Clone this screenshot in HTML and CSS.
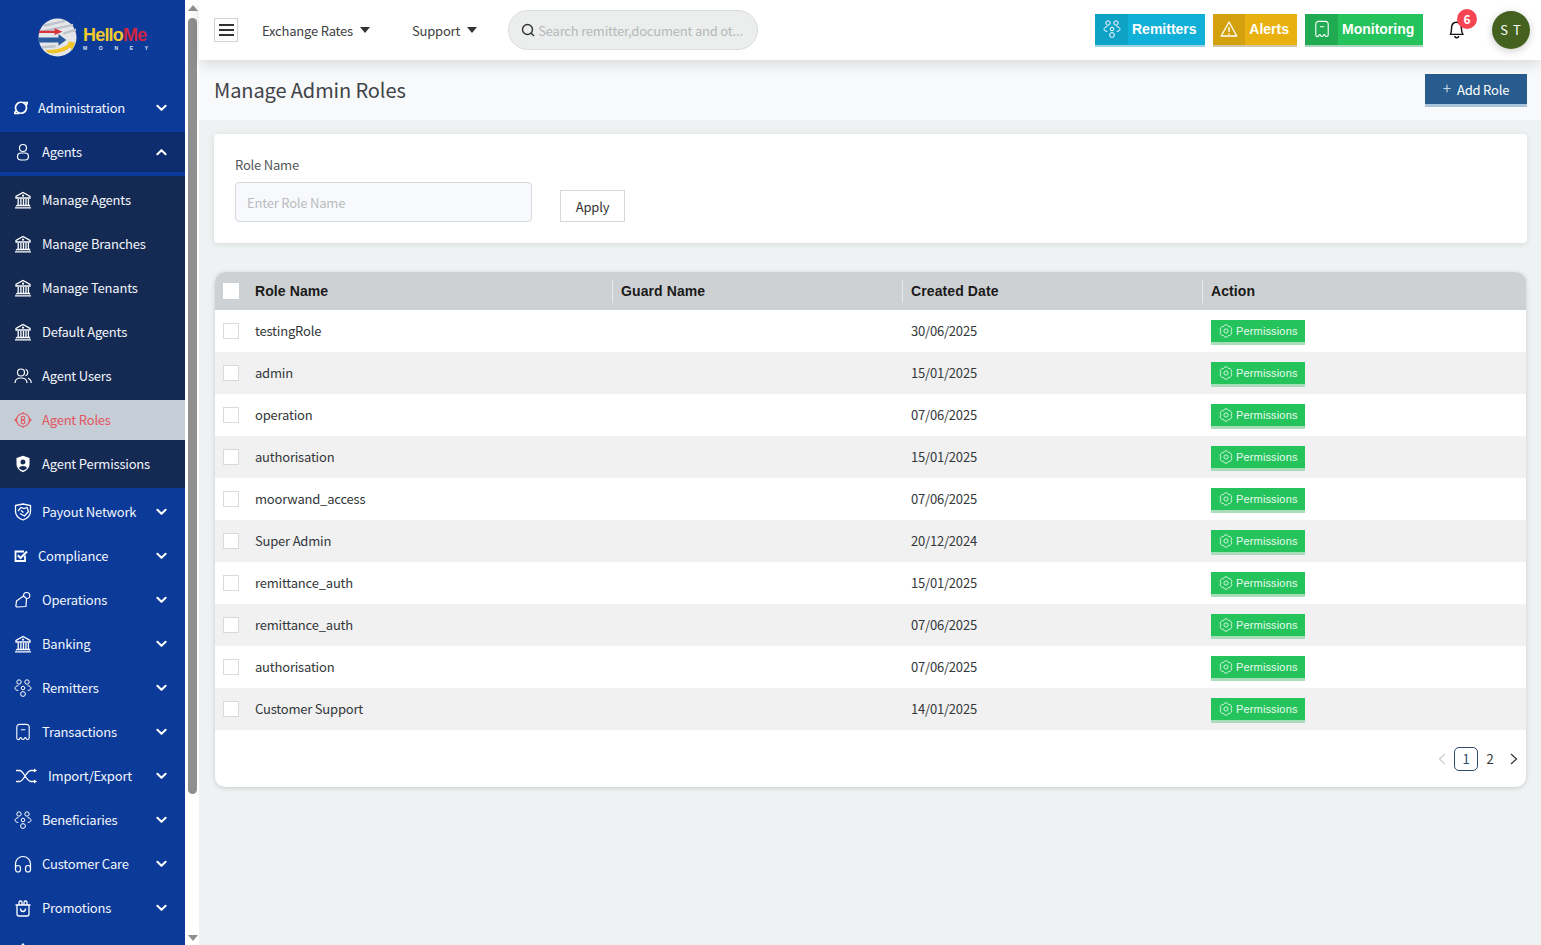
FILE: index.html
```html
<!DOCTYPE html>
<html lang="en">
<head>
<meta charset="utf-8">
<title>Manage Admin Roles</title>
<link rel="stylesheet" href="styles.css">
</head>
<body>
<svg class="defs" width="0" height="0" aria-hidden="true">
  <defs>
    <symbol id="i-bank" viewBox="0 0 18 18"><path d="M2 7V5.500L9 1.500l7 4V7zM1 16.800h16M2.500 14.500h13V15.500M2.500 14.500v1M4.200 8v6M6.900 8v6M9.500 8v6M12 8v6M14.400 8v6" fill="none" stroke="currentColor" stroke-width="1.300"/><circle cx="9" cy="4.700" r="1.100" fill="currentColor"/></symbol>
    <symbol id="i-group" viewBox="0 0 18 18"><g fill="none" stroke="currentColor" stroke-width="1"><circle cx="5" cy="3" r="2.200"/><circle cx="13" cy="3" r="2.200"/><circle cx="9" cy="15" r="2.400"/><circle cx="9" cy="9" r="1.800"/><path d="M4.500 6.700C2.500 6.700 1 7.800 1 9.200s1.500 2.200 3.300 2.200M13.500 6.700c2 0 3.500 1.100 3.500 2.500s-1.500 2.200-3.300 2.200"/></g></symbol>
    <symbol id="i-receipt" viewBox="0 0 18 18"><path d="M2.800 15.200V4A2.600 2.600 0 0 1 5.400 1.400h7.200A2.600 2.600 0 0 1 15.200 4v11.200c-.6 1.800-2.200 1.800-3 .2-.6-1-1.200-1-1.800 0-.7 1.500-2.100 1.500-2.800 0-.6-1-1.200-1-1.800 0-.8 1.600-2.400 1.600-3 0zM6.800 6.800h4.400" fill="none" stroke="currentColor" stroke-width="1.100"/></symbol>
    <symbol id="i-gear" viewBox="0 0 18 18"><g fill="none" stroke="currentColor" stroke-width="1.100"><path d="M15.500 9A3.400 3.400 0 0 1 12.250 14.630 3.400 3.400 0 0 1 5.750 14.630 3.400 3.400 0 0 1 2.500 9 3.400 3.400 0 0 1 5.750 3.370 3.400 3.400 0 0 1 12.250 3.370 3.400 3.400 0 0 1 15.500 9z"/><circle cx="9" cy="9" r="2.700"/></g></symbol>
    <symbol id="i-chev" viewBox="0 0 12 8"><path d="M1.500 1.500 6 6l4.500-4.500" fill="none" stroke="currentColor" stroke-width="2.200" stroke-linecap="round" stroke-linejoin="round"/></symbol>
  </defs>
</svg>

<div class="app">
  <aside class="sidebar">
    <div class="logo">
      <svg class="logo-mark" viewBox="0 0 40 40" aria-hidden="true">
        <circle cx="20" cy="20" r="19.500" fill="#e4e6ea"/>
        <path d="M6 8 28 3M3 14 36 7M26 16l13-4M4 30l14-1" stroke="#bfc3cc" stroke-width="2.500" fill="none"/>
        <path d="M1 13h16V10.500l8 3.500-8 3.500V15.500H1z" fill="#d8323a"/>
        <path d="M0 20h21v-3.500l8 6-8 6V25H1z" fill="#285a9c"/>
        <path d="M7 33 C18 33 26 31 31 27v-3l7 1-3 8-2-3C27 35 18 37 11 36z" fill="#f2c526"/>
      </svg>
      <div class="logo-text">
        <div class="logo-name">Hello<span class="logo-me">Me</span></div>
        <div class="logo-sub">MONEY</div>
      </div>
    </div>

    <nav class="nav">
      <a class="nav-item narrow">
        <svg class="ico" viewBox="0 0 14 16"><path d="M3.500 3.500A5 5 0 1 0 10.500 12 5 5 0 1 0 3.500 3.500zM9 2.500h4.500L12.500 5M5 13.500H.5L1.500 11" fill="none" stroke="currentColor" stroke-width="1.700"/></svg>
        <span class="lbl">Administration</span><svg class="chev"><use href="#i-chev"/></svg>
      </a>
      <a class="nav-item open">
        <svg class="ico" viewBox="0 0 18 18"><g fill="none" stroke="currentColor" stroke-width="1.200"><circle cx="9" cy="5" r="3.500"/><rect x="3.500" y="10" width="11" height="7" rx="3.500"/></g></svg>
        <span class="lbl">Agents</span><svg class="chev up"><use href="#i-chev"/></svg>
      </a>
      <div class="subnav">
        <a class="nav-item"><svg class="ico"><use href="#i-bank"/></svg><span class="lbl">Manage Agents</span></a>
        <a class="nav-item"><svg class="ico"><use href="#i-bank"/></svg><span class="lbl">Manage Branches</span></a>
        <a class="nav-item"><svg class="ico"><use href="#i-bank"/></svg><span class="lbl">Manage Tenants</span></a>
        <a class="nav-item"><svg class="ico"><use href="#i-bank"/></svg><span class="lbl">Default Agents</span></a>
        <a class="nav-item"><svg class="ico" viewBox="0 0 18 18"><g fill="none" stroke="currentColor" stroke-width="1.200"><circle cx="7" cy="5.500" r="3.500"/><path d="M1 16c0-3.500 2.500-5 6-5s6 1.500 6 5M11.500 2.200a3.500 3.500 0 0 1 0 6.600M14 11.200c2 .7 3.200 2.300 3.200 4.800"/></g></svg><span class="lbl">Agent Users</span></a>
        <a class="nav-item active"><svg class="ico" viewBox="0 0 18 18"><g fill="none" stroke="currentColor" stroke-width="1.100"><circle cx="9" cy="9" r="6.500"/><path d="M1 9l1.500-1.500v3zM17 9l-1.500-1.500v3z" fill="currentColor"/><circle cx="9" cy="7" r="1.700"/><circle cx="9" cy="11" r="1.900"/><path d="M9 1v1M9 16v1"/></g></svg><span class="lbl">Agent Roles</span></a>
        <a class="nav-item"><svg class="ico" viewBox="0 0 18 18"><path fill-rule="evenodd" d="M9 .8 15.500 3v6c0 4-3 6.800-6.500 8.200C5.500 15.800 2.500 13 2.500 9V3zM9 4.500a2.500 2.500 0 1 0 0 5 2.500 2.500 0 0 0 0-5zM5 13.200c1 1 2.500 1.800 4 2.300 1.500-.5 3-1.300 4-2.300-.5-1.500-2.200-2.200-4-2.200s-3.500.7-4 2.200z" fill="currentColor"/></svg><span class="lbl">Agent Permissions</span></a>
      </div>
      <a class="nav-item"><svg class="ico" viewBox="0 0 18 18"><path d="M1.500 2.500 9 1l7.500 1.500v6c0 4-3.500 7-7.500 8.500-4-1.500-7.500-4.500-7.500-8.500zM4 8l3-3.500 3 1 3-1 1.500 4-4 4.500L6 10.500M7 7.500l2.500 2" fill="none" stroke="currentColor" stroke-width="1.300"/></svg><span class="lbl">Payout Network</span><svg class="chev"><use href="#i-chev"/></svg></a>
      <a class="nav-item narrow"><svg class="ico" viewBox="0 0 14 14"><path d="M11 6.500V12H1.500V2.500H10" fill="none" stroke="currentColor" stroke-width="1.800"/><path d="M3.800 6.200 6.500 9 13 2.500" fill="none" stroke="currentColor" stroke-width="2"/></svg><span class="lbl">Compliance</span><svg class="chev"><use href="#i-chev"/></svg></a>
      <a class="nav-item"><svg class="ico" viewBox="0 0 18 18"><path d="M2.500 10 9.500 5l3 2.500-.5 8-8.500.5c-1.500 0-2-1-1.500-2zM9.500 5c0-2 1.200-3.500 3-3.500 1.900 0 3.300 1.500 3.300 3.200 0 1.800-1.500 3-3.300 2.800" fill="none" stroke="currentColor" stroke-width="1.200" stroke-linejoin="round"/></svg><span class="lbl">Operations</span><svg class="chev"><use href="#i-chev"/></svg></a>
      <a class="nav-item"><svg class="ico"><use href="#i-bank"/></svg><span class="lbl">Banking</span><svg class="chev"><use href="#i-chev"/></svg></a>
      <a class="nav-item"><svg class="ico"><use href="#i-group"/></svg><span class="lbl">Remitters</span><svg class="chev"><use href="#i-chev"/></svg></a>
      <a class="nav-item"><svg class="ico"><use href="#i-receipt"/></svg><span class="lbl">Transactions</span><svg class="chev"><use href="#i-chev"/></svg></a>
      <a class="nav-item wide"><svg class="ico" viewBox="0 0 24 18"><path d="M2 3.500h3.500C10 3.500 12 14.500 17 14.500h4M2 14.500h3.500C10 14.500 12 3.500 17 3.500h4" fill="none" stroke="currentColor" stroke-width="1.300"/><path d="M20 1.500 23 3.500 20 5.500zM20 12.500l3 2-3 2z" fill="currentColor"/></svg><span class="lbl">Import/Export</span><svg class="chev"><use href="#i-chev"/></svg></a>
      <a class="nav-item"><svg class="ico"><use href="#i-group"/></svg><span class="lbl">Beneficiaries</span><svg class="chev"><use href="#i-chev"/></svg></a>
      <a class="nav-item"><svg class="ico" viewBox="0 0 18 18"><g fill="none" stroke="currentColor" stroke-width="1.200"><path d="M1.500 13V9a7.500 7.500 0 0 1 15 0v4"/><rect x="1.500" y="10.500" width="5" height="6.500" rx="2.500"/><rect x="11.500" y="10.500" width="5" height="6.500" rx="2.500"/></g></svg><span class="lbl">Customer Care</span><svg class="chev"><use href="#i-chev"/></svg></a>
      <a class="nav-item"><svg class="ico" viewBox="0 0 18 18"><g fill="none" stroke="currentColor" stroke-width="1.300"><path d="M3 6h12v9a2 2 0 0 1-2 2H5a2 2 0 0 1-2-2zM1.500 6h15M5 6V3.500A1.500 1.500 0 0 1 8 3.500V6M10 6V3.500a1.500 1.500 0 0 1 3 0V6M6.500 9.500c0 4 5 4 5 0"/></g></svg><span class="lbl">Promotions</span><svg class="chev"><use href="#i-chev"/></svg></a>
      <a class="nav-item"><svg class="ico" viewBox="0 0 18 18"><path d="M9 1 3 8h12z" fill="none" stroke="currentColor" stroke-width="1.300"/></svg></a>
    </nav>
  </aside>

  <div class="scrollbar" aria-hidden="true">
    <span class="arrow-up"></span>
    <span class="thumb"></span>
    <span class="arrow-down"></span>
  </div>

  <div class="content">
    <header class="topbar">
      <button class="burger" aria-label="Menu"><span></span><span></span><span></span></button>
      <a class="menu-link first">Exchange Rates<span class="caret"></span></a>
      <a class="menu-link second">Support<span class="caret"></span></a>
      <div class="search">
        <svg class="search-ico" viewBox="0 0 14 14"><circle cx="6.500" cy="6.500" r="5" fill="none" stroke="#333" stroke-width="1.400"/><path d="m10 10 3 3" stroke="#333" stroke-width="1.400"/></svg>
        <span class="search-text">Search remitter,document and ot...</span>
      </div>
      <div class="quick">
        <a class="qbtn q-blue"><span class="qico"><svg><use href="#i-group"/></svg></span><span class="qlbl">Remitters</span></a>
        <a class="qbtn q-yellow"><span class="qico"><svg viewBox="0 0 18 18"><path d="M9 2 1.200 16h15.600z" fill="none" stroke="currentColor" stroke-width="1.300" stroke-linejoin="round"/><path d="M9 7v5M9 13.200v1.300" stroke="currentColor" stroke-width="1.400"/></svg></span><span class="qlbl">Alerts</span></a>
        <a class="qbtn q-green"><span class="qico"><svg><use href="#i-receipt"/></svg></span><span class="qlbl">Monitoring</span></a>
      </div>
      <div class="bell">
        <svg viewBox="0 0 18 20"><path d="M3 14c1-1.500 1-3 1-5.500C4 5 6 3 8.500 3S13 5 13 8.500c0 2.500.2 4 1.500 5.500zM7 15.500c0 2 3.500 2 3.500 0" fill="none" stroke="#111" stroke-width="1.300" stroke-linejoin="round"/></svg>
        <span class="badge">6</span>
      </div>
      <div class="avatar">S T</div>
    </header>

    <div class="titlebar">
      <h1>Manage Admin Roles</h1>
      <a class="add-role"><span class="plus">+</span>Add Role</a>
    </div>

    <main class="main">
      <section class="filter">
        <div class="field">
          <label class="field-label" for="role">Role Name</label>
          <input class="field-input" id="role" placeholder="Enter Role Name">
        </div>
        <button class="apply">Apply</button>
      </section>

      <section class="table-card">
        <table class="roles">
          <colgroup><col class="c-check"><col class="c-role"><col class="c-guard"><col class="c-date"><col></colgroup>
          <thead>
            <tr><th><span class="check head"></span></th><th>Role Name</th><th class="sep">Guard Name</th><th class="sep">Created Date</th><th class="sep">Action</th></tr>
          </thead>
          <tbody>
            <tr><td><span class="check"></span></td><td>testingRole</td><td></td><td>30/06/2025</td><td><a class="perm"><svg><use href="#i-gear"/></svg>Permissions</a></td></tr>
            <tr><td><span class="check"></span></td><td>admin</td><td></td><td>15/01/2025</td><td><a class="perm"><svg><use href="#i-gear"/></svg>Permissions</a></td></tr>
            <tr><td><span class="check"></span></td><td>operation</td><td></td><td>07/06/2025</td><td><a class="perm"><svg><use href="#i-gear"/></svg>Permissions</a></td></tr>
            <tr><td><span class="check"></span></td><td>authorisation</td><td></td><td>15/01/2025</td><td><a class="perm"><svg><use href="#i-gear"/></svg>Permissions</a></td></tr>
            <tr><td><span class="check"></span></td><td>moorwand_access</td><td></td><td>07/06/2025</td><td><a class="perm"><svg><use href="#i-gear"/></svg>Permissions</a></td></tr>
            <tr><td><span class="check"></span></td><td>Super Admin</td><td></td><td>20/12/2024</td><td><a class="perm"><svg><use href="#i-gear"/></svg>Permissions</a></td></tr>
            <tr><td><span class="check"></span></td><td>remittance_auth</td><td></td><td>15/01/2025</td><td><a class="perm"><svg><use href="#i-gear"/></svg>Permissions</a></td></tr>
            <tr><td><span class="check"></span></td><td>remittance_auth</td><td></td><td>07/06/2025</td><td><a class="perm"><svg><use href="#i-gear"/></svg>Permissions</a></td></tr>
            <tr><td><span class="check"></span></td><td>authorisation</td><td></td><td>07/06/2025</td><td><a class="perm"><svg><use href="#i-gear"/></svg>Permissions</a></td></tr>
            <tr><td><span class="check"></span></td><td>Customer Support</td><td></td><td>14/01/2025</td><td><a class="perm"><svg><use href="#i-gear"/></svg>Permissions</a></td></tr>
          </tbody>
        </table>
        <div class="pager">
          <svg class="pg-arrow off" viewBox="0 0 8 12"><path d="M7 1 1.500 6 7 11" fill="none" stroke="currentColor" stroke-width="1.200"/></svg>
          <span class="pg current">1</span>
          <span class="pg">2</span>
          <svg class="pg-arrow" viewBox="0 0 8 12"><path d="M1 1l5.500 5L1 11" fill="none" stroke="currentColor" stroke-width="1.200"/></svg>
        </div>
      </section>
    </main>
  </div>
</div>
</body>
</html>
```
FILE: styles.css
```css
* { box-sizing: border-box; }
html, body { margin: 0; height: 100%; overflow: hidden; }
body { font-family: "Noto Sans CJK SC", "Source Sans Pro", "Noto Sans", sans-serif; font-size: 13px; letter-spacing: -.2px; color: #212529; background: #eff2f3; }
.defs { position: absolute; }
.app { display: flex; height: 945px; }

/* Sidebar */
.sidebar { width: 185px; flex: none; height: 945px; overflow: hidden; background: #0b3a98; color: #fff; }
.logo { height: 86px; display: flex; align-items: flex-start; padding: 18px 0 0 38px; gap: 6px; }
.logo-mark { width: 39px; height: 39px; flex: none; }
.logo-text { padding-top: 8px; width: 66px; }
.logo-name { font: bold 18px/19px "Liberation Sans", sans-serif; letter-spacing: -.8px; color: #f0c82e; white-space: nowrap; }
.logo-me { color: #cf2340; }
.logo-sub { font: bold 5px/6px "Liberation Sans", sans-serif; letter-spacing: 11.700px; color: #dfe6f5; white-space: nowrap; }

.nav-item { display: flex; align-items: center; height: 44px; padding-left: 14px; color: #f2f6fd; line-height: 20px; }
.ico { width: 18px; height: 18px; flex: none; margin-right: 10px; color: #fff; }
.narrow .ico { width: 14px; height: 16px; }
.wide .ico { width: 24px; height: 18px; }
.lbl { white-space: nowrap; }
.chev { width: 11px; height: 8px; margin-left: auto; margin-right: 18px; margin-top: -1px; flex: none; color: #fff; }
.chev.up { transform: rotate(180deg); }
.nav-item.open { height: 40px; background: #0d2d6f; margin-top: 2px; }
.subnav { margin: 4px 0 2px; background: #152a52; padding: 2px 0; }
.subnav .nav-item.active { height: 40px; margin: 2px 0; background: #c5ced7; color: #e2565f; }
.subnav .nav-item.active .ico { color: #e2565f; }

/* Scrollbar track of the sidebar */
.scrollbar { width: 14px; flex: none; height: 945px; background: #fff; display: flex; flex-direction: column; align-items: center; padding: 5px 0 4px 1px; }
.arrow-up { width: 0; height: 0; border: 5px solid transparent; border-top: 0; border-bottom: 6px solid #8e8e8e; }
.thumb { width: 9px; height: 776px; margin-top: 7px; background: #8f8f8f; border-radius: 5px; }
.arrow-down { width: 0; height: 0; margin-top: auto; border: 5px solid transparent; border-bottom: 0; border-top: 6px solid #8e8e8e; }

/* Content */
.content { flex: 1; min-width: 0; display: flex; flex-direction: column; }
.topbar { height: 60px; flex: none; display: flex; align-items: center; background: #fff; padding: 0 11px 0 15px; box-shadow: 0 4px 14px rgba(0,0,0,.13); position: relative; z-index: 1; }
.burger { width: 24px; height: 24px; padding: 0; border: 1px solid #cfd3d6; background: #fff; display: flex; flex-direction: column; justify-content: center; align-items: center; gap: 3px; flex: none; }
.burger span { width: 15px; height: 2px; background: #333; }
.menu-link { display: flex; align-items: center; color: #3d4144; white-space: nowrap; }
.menu-link.first { margin-left: 24px; }
.menu-link.second { margin-left: 42px; }
.caret { width: 0; height: 0; margin-left: 7px; border: 5px solid transparent; border-bottom: 0; border-top: 6px solid #333; }
.search { width: 250px; height: 40px; margin-left: 31px; flex: none; display: flex; align-items: center; gap: 3px; padding: 0 8px 0 12px; border: 1px solid #d9dcdc; border-radius: 20px; background: #eceeee; overflow: hidden; }
.search-ico { width: 14px; height: 14px; flex: none; }
.search-text { color: #b5b8ba; white-space: nowrap; }
.quick { display: flex; gap: 8px; margin-left: auto; }
.qbtn { display: flex; height: 33px; color: #fff; font: bold 14px/31px "Liberation Sans", sans-serif; letter-spacing: 0; border-bottom: 2px solid; }
.qico { width: 33px; display: flex; align-items: center; justify-content: center; }
.qico svg { width: 18px; height: 18px; }
.qlbl { padding-left: 4px; padding-right: 8px; white-space: nowrap; }
.q-blue { background: #10b0d8; border-color: #9fd3e2; width: 110px; }
.q-blue .qico { background: #0ea3c6; }
.q-yellow { background: #e9b10f; border-color: #cfc7a8; width: 84px; }
.q-yellow .qico { background: #d3a10d; }
.q-green { background: #24c35c; border-color: #aad5ba; width: 118px; }
.q-green .qico { background: #20ab52; }
.bell { position: relative; width: 20px; height: 22px; margin-left: 24px; flex: none; }
.bell svg { width: 20px; height: 22px; display: block; }
.badge { position: absolute; top: -10px; left: 10px; width: 20px; height: 20px; border-radius: 50%; background: #f54552; color: #fff; font-size: 12px; font-weight: 700; line-height: 19px; text-align: center; letter-spacing: 0; }
.avatar { width: 38px; height: 38px; margin-left: 25px; flex: none; border-radius: 50%; background: #44611f; color: #fff; font-size: 13px; line-height: 38px; text-align: center; letter-spacing: 1px; box-shadow: 0 2px 8px rgba(0,0,0,.2); }

.titlebar { height: 60px; flex: none; display: flex; align-items: center; justify-content: space-between; padding: 0 14px 0 15px; background: #f8f9fa; }
h1 { margin: 0; font-size: 20px; font-weight: 400; letter-spacing: -.1px; color: #3f4347; line-height: 28px; }
.add-role { display: flex; align-items: center; justify-content: center; width: 102px; height: 33px; margin-top: 1px; padding-top: 1px; background: #285c8e; border-bottom: 3px solid #a9c3db; color: #fff; }
.plus { margin-right: 6px; font-size: 15px; color: #c3d5e6; line-height: 18px; margin-top: -3px; }

.main { flex: 1; padding: 14px 14px 0 15px; }
.filter { height: 109px; display: flex; align-items: flex-end; gap: 28px; padding: 0 21px 21px; background: #fff; border-radius: 4px; box-shadow: 0 1px 6px rgba(0,0,0,.1); }
.field { width: 297px; }
.field-label { display: block; height: 18px; margin-bottom: 8px; line-height: 18px; color: #53585c; }
.field-input { display: block; width: 100%; height: 40px; padding: 0 11px; border: 1px solid #d5d8dc; border-radius: 4px; background: #f8f9fc; font: inherit; letter-spacing: inherit; }
.field-input::placeholder { color: #b9bcc0; opacity: 1; }
.apply { width: 65px; height: 32px; padding: 0; background: #fff; border: 1px solid #d5d8da; font: inherit; letter-spacing: inherit; color: #333; }

.table-card { margin: 29px 1px 0; height: 515px; background: #fff; border-radius: 10px; box-shadow: 0 1px 5px rgba(0,0,0,.16); overflow: hidden; }
.roles { width: 100%; table-layout: fixed; border-collapse: collapse; }
.c-check { width: 32px; }
.c-role { width: 365px; }
.c-guard { width: 290px; }
.c-date { width: 300px; }
.roles th { height: 38px; padding: 0 0 0 9px; background: #ced1d3; font: bold 14px/16px "Liberation Sans", sans-serif; letter-spacing: .1px; color: #1a1a1a; text-align: left; position: relative; }
.roles th:first-child, .roles th:nth-child(2), .roles td:first-child, .roles td:nth-child(2) { padding-left: 8px; }
.roles th.sep::before { content: ""; position: absolute; left: 0; top: 8px; bottom: 7px; width: 1px; background: #e9eaeb; }
.roles td { height: 42px; padding: 0 0 1px 9px; color: #33373a; vertical-align: middle; }
.roles tbody tr:nth-child(even) td { background: #f1f1f1; }
.check { display: block; width: 16px; height: 16px; border: 1px solid #d8dadc; background: #fff; }
.check.head { border: 0; }
.perm { display: inline-flex; align-items: center; gap: 3px; width: 94px; height: 25px; padding-left: 8px; background: #24c35c; border-bottom: 3px solid #a9dcbb; color: #e9fbef; font: 11px/14px "Liberation Sans", sans-serif; letter-spacing: .15px; vertical-align: middle; margin-top: 3px; }
.perm svg { width: 14px; height: 14px; flex: none; }
.pager { display: flex; justify-content: flex-end; align-items: center; height: 57px; padding-right: 8px; }
.pg { width: 24px; height: 24px; border-radius: 5px; line-height: 22px; text-align: center; border: 1px solid transparent; color: #333; }
.pg.current { border-color: #2f4b6e; color: #2f4b6e; }
.pg-arrow { width: 8px; height: 12px; color: #333; margin-left: 8px; }
.pg-arrow.off { color: #c9ccd0; margin-left: 0; margin-right: 8px; }
```
